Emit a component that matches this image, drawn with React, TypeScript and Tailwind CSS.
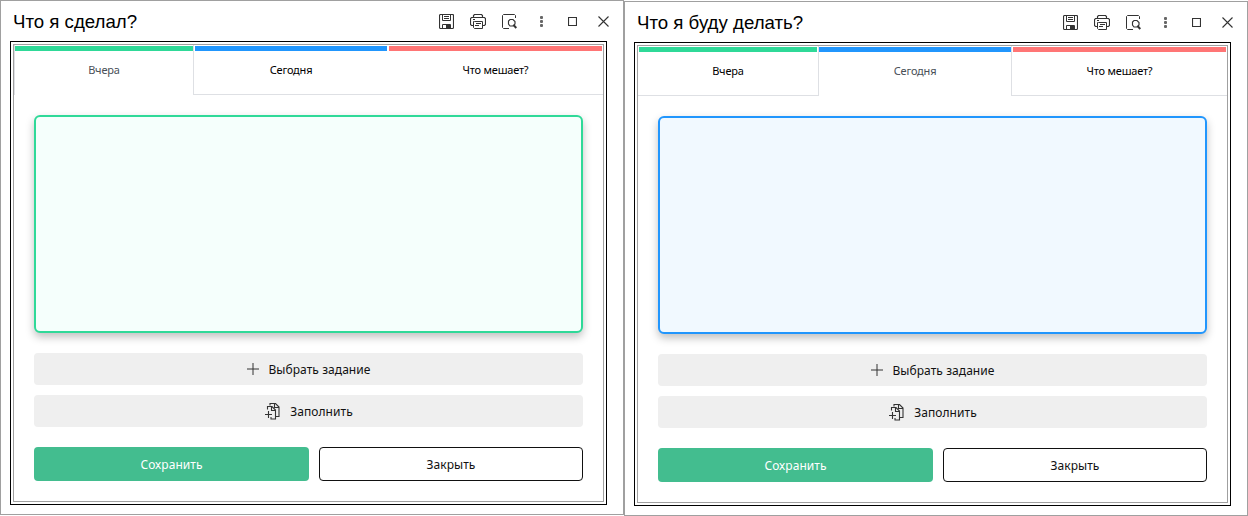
import type { ReactNode } from "react";

const stroke = { fill: "none", stroke: "#333", strokeWidth: 1 } as const;

function SaveIcon() {
  return (
    <svg width="15" height="15" viewBox="0 0 15 15" {...stroke}>
      <rect x=".5" y=".5" width="14" height="14" rx="1" strokeWidth="1.15" />
      <path d="M3.500 .5v6h8v-6M5 2.500h5M5 4.500h5M3.500 14.500v-4h8v4" />
      <path d="M7 11h4v3.500H7z" fill="#333" stroke="none" />
    </svg>
  );
}

function PrintIcon() {
  return (
    <svg width="16" height="15" viewBox="0 0 16 15" {...stroke}>
      <path d="M3.500 3.500v-2l1-1h7l1 1v2M3 11.500H1.500l-1-1v-6l1-1h13l1 1v6l-1 1H13" strokeWidth="1.15" />
      <path d="M4.500 7.500h8v7h-8l-1-1v-6zM3 5.500h2M6 9.500h5M5 11.500h4" />
    </svg>
  );
}

function PreviewIcon() {
  return (
    <svg width="15" height="15" viewBox="0 0 15 15" {...stroke}>
      <path d="M7 14.500H1.500l-1-1v-12l1-1h11l1 1V4" />
      <path d="M8 5.500h3l2 2v2.500l-2 2H8L6.500 10V7z" strokeWidth="1.15" />
      <path d="M11.500 11l2.800 3" strokeWidth="2" />
    </svg>
  );
}

function CopyAddIcon() {
  return (
    <svg width="15" height="17" viewBox="0 0 15 17" fill="none" stroke="#333" strokeWidth="1.1">
      <path d="M5 2.500V.5h5.500l3.500 3.500v9.500h-3M9.500.5v4h4.500" />
      <path d="M2.500 6.500v-3H7l3.500 3.500v9H6V14M6.500 3.500v4h4" />
      <path d="M0 11.500h7M3.500 8v7" />
    </svg>
  );
}

type Accent = "green" | "blue";

function Tab({ label, bar, className, active }: { label: string; bar: string; className: string; active: boolean }) {
  return (
    <div className={`flex flex-col border-[#dee0e4] pt-px ${className}`}>
      <div className={`h-[5px] ${bar}`} />
      <div className={`pt-[11px] text-center font-['Noto_Sans','Open_Sans',sans-serif] text-[11px] leading-4 tracking-[-0.2px] ${active ? "text-[#495057]" : "text-black"}`}>
        {label}
      </div>
    </div>
  );
}

function Action({ icon, label, className }: { icon: ReactNode; label: string; className: string }) {
  return (
    <button className={`flex items-center justify-center rounded bg-[#efefef] ${className}`}>
      {icon}
      <span className="pt-0.5">{label}</span>
    </button>
  );
}

function ReportWindow({ title, accent }: { title: string; accent: Accent }) {
  const green = accent === "green";
  return (
    <section className="h-[515px] w-[624px] border border-[#a0a0a0] bg-white px-[9px]">
      <header className="flex h-10 items-center pl-[3px] pr-[6px]">
        <h1 className="flex-1 pt-0.5 font-['Liberation_Sans',Arial,sans-serif] text-[18.67px] leading-6 text-black">{title}</h1>
        <div className="flex h-[15px] items-center">
          <SaveIcon />
          <span className="ml-4"><PrintIcon /></span>
          <span className="ml-4"><PreviewIcon /></span>
          <svg className="ml-[23px]" width="3" height="11" viewBox="0 0 3 11" fill="#666">
            <rect width="3" height="3" rx="1" /><rect y="4" width="3" height="3" rx="1" /><rect y="8" width="3" height="3" rx="1" />
          </svg>
          <svg className="ml-[25px]" width="9" height="9" viewBox="0 0 9 9" {...stroke}><path d="M.5.5h8v8h-8z" strokeWidth="1.15" /></svg>
          <svg className="-mr-px ml-[21px]" width="11" height="11" viewBox="0 0 11 11" {...stroke}><path d="M.5.5l10 10m0-10l-10 10" strokeWidth="1.1" /></svg>
        </div>
      </header>
      <div className="h-[464px] w-[597px] border border-black p-[2px]">
        <div className="h-full border border-[#a0a0a0]">
          <nav className="flex h-[50px]">
            <Tab label="Вчера" bar={green ? "bg-[#2fd998]" : "ml-px mr-px bg-[#2fd998]"} active={green} className={green ? "w-[180px] border-x" : "w-[181px] border-b border-r"} />
            <Tab label="Сегодня" bar={green ? "mx-px bg-[#2196fd]" : "bg-[#2196fd]"} active={!green} className={green ? "w-[194px] border-b" : "w-[193px] border-r"} />
            <Tab label="Что мешает?" bar="bg-[#ff7575] mx-px" active={false} className="flex-1 border-b" />
          </nav>
          <main className="px-5 pt-5 font-['Noto_Sans','Open_Sans',sans-serif] text-[12px] tracking-[0.06px] text-[#111]">
            <div className={`h-[218px] rounded-md border-2 shadow-[0_4px_9px_rgba(0,0,0,0.25)] ${green ? "border-[#2fd998] bg-[#f5fffc]" : "border-[#2196fd] bg-[#f1f9ff]"}`} />
            <Action
              className="mt-5 h-8 w-full gap-[10px]"
              label="Выбрать задание"
              icon={<svg width="12" height="12" viewBox="0 0 12 12" {...stroke}><path d="M6 0v12M0 6h12" /></svg>}
            />
            <Action className="mt-[10px] h-8 w-full gap-[10px] pl-px" label="Заполнить" icon={<CopyAddIcon />} />
            <div className="mt-5 flex gap-[10px]">
              <button className="h-[34px] w-[275px] rounded bg-[#43bd8f] pt-0.5 text-white">Сохранить</button>
              <button className="h-[34px] flex-1 rounded border border-[#111] bg-white pt-0.5">Закрыть</button>
            </div>
          </main>
        </div>
      </div>
    </section>
  );
}

export default function App() {
  return (
    <div className="flex h-[516px] w-[1248px] overflow-hidden bg-white">
      <ReportWindow title="Что я сделал?" accent="green" />
      <div className="pt-px">
        <ReportWindow title="Что я буду делать?" accent="blue" />
      </div>
    </div>
  );
}
